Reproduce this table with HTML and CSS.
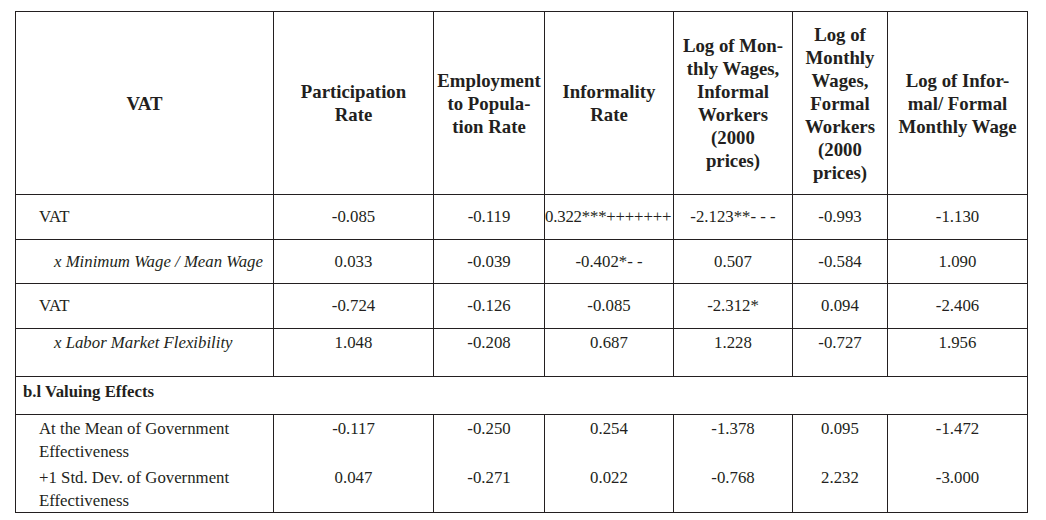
FILE: index.html
```html
<!DOCTYPE html>
<html>
<head>
<meta charset="utf-8">
<link rel="stylesheet" href="styles.css">
</head>
<body>
<div class="page">
<table class="results">
  <colgroup>
    <col class="c-label">
    <col class="c-part">
    <col class="c-emp">
    <col class="c-inf">
    <col class="c-wi">
    <col class="c-wf">
    <col class="c-ratio">
  </colgroup>
  <thead>
    <tr class="head">
      <th>VAT</th>
      <th>Participation<br>Rate</th>
      <th>Employment<br>to Popula-<br>tion Rate</th>
      <th>Informality<br>Rate</th>
      <th>Log of Mon-<br>thly Wages,<br>Informal<br>Workers<br>(2000<br>prices)</th>
      <th>Log of<br>Monthly<br>Wages,<br>Formal<br>Workers<br>(2000<br>prices)</th>
      <th>Log of Infor-<br>mal/ Formal<br>Monthly Wage</th>
    </tr>
  </thead>
  <tbody>
    <tr class="r-mid r1">
      <td class="lab">VAT</td>
      <td>-0.085</td>
      <td>-0.119</td>
      <td class="tight">0.322***+++++++</td>
      <td>-2.123**- - -</td>
      <td>-0.993</td>
      <td>-1.130</td>
    </tr>
    <tr class="r-mid r2">
      <td class="lab it">x Minimum Wage / Mean Wage</td>
      <td>0.033</td>
      <td>-0.039</td>
      <td>-0.402*- -</td>
      <td>0.507</td>
      <td>-0.584</td>
      <td>1.090</td>
    </tr>
    <tr class="r-mid r3">
      <td class="lab">VAT</td>
      <td>-0.724</td>
      <td>-0.126</td>
      <td>-0.085</td>
      <td>-2.312*</td>
      <td>0.094</td>
      <td>-2.406</td>
    </tr>
    <tr class="r-top r4">
      <td class="lab it">x Labor Market Flexibility</td>
      <td>1.048</td>
      <td>-0.208</td>
      <td>0.687</td>
      <td>1.228</td>
      <td>-0.727</td>
      <td>1.956</td>
    </tr>
    <tr class="r-sec">
      <td colspan="7" class="sec">b.l Valuing Effects</td>
    </tr>
    <tr class="r-a">
      <td class="lab">At the Mean of Government<br>Effectiveness</td>
      <td>-0.117</td>
      <td>-0.250</td>
      <td>0.254</td>
      <td>-1.378</td>
      <td>0.095</td>
      <td>-1.472</td>
    </tr>
    <tr class="r-b">
      <td class="lab">+1 Std. Dev. of Government<br>Effectiveness</td>
      <td>0.047</td>
      <td>-0.271</td>
      <td>0.022</td>
      <td>-0.768</td>
      <td>2.232</td>
      <td>-3.000</td>
    </tr>
  </tbody>
</table>
</div>
</body>
</html>
```

FILE: styles.css
```css
html, body {
  margin: 0;
  padding: 0;
  background: #ffffff;
}

.page {
  padding: 11px 0 0 15px;
}

.results {
  border-collapse: collapse;
  table-layout: fixed;
  width: 1013px;
  font-family: "Liberation Serif", "Times New Roman", serif;
  color: #231f20;
  font-size: 16.8px;
  line-height: 23px;
}

.c-label { width: 258px; }
.c-part { width: 160px; }
.c-emp { width: 111px; }
.c-inf { width: 129px; }
.c-wi { width: 119px; }
.c-wf { width: 95px; }
.c-ratio { width: 140px; }

.results th,
.results td {
  border: 1px solid #231f20;
  padding: 0;
  text-align: center;
  white-space: nowrap;
}

.results th {
  font-size: 18.8px;
  font-weight: bold;
  vertical-align: middle;
  height: 182px;
  line-height: 23px;
}

.results td {
  vertical-align: top;
}

.r-mid td {
  padding-top: 10px;
}

.r1 td { height: 34px; }
.r2 td { height: 33px; }
.r3 td { height: 34px; }

.r4 td {
  padding-top: 2px;
  height: 45px;
}

.r-sec td {
  padding-top: 3px;
  height: 34px;
}

.r-a td {
  padding-top: 2px;
  padding-bottom: 3px;
  border-bottom: none;
}

.r-b td {
  padding-top: 0;
  border-top: none;
}

.results td.lab {
  text-align: left;
  padding-left: 23px;
}

.results td.lab.it {
  font-style: italic;
  padding-left: 38px;
}

.results td.sec {
  text-align: left;
  font-weight: bold;
  padding-left: 7px;
}

.results td.tight {
  text-align: left;
  padding-left: 0;
  letter-spacing: -0.2px;
  overflow: visible;
}
```
